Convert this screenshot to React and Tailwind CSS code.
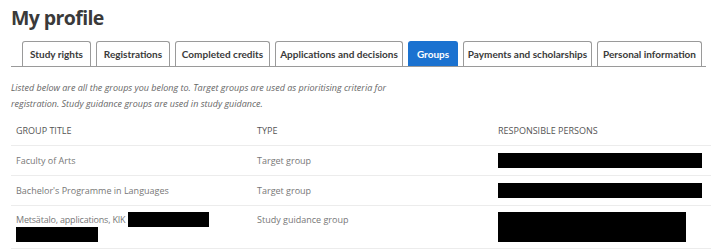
import React from 'react';

const tabs = [
  { label: 'Study rights', w: 'w-[69px]' },
  { label: 'Registrations', w: 'w-[74px]' },
  { label: 'Completed credits', w: 'w-[95px]' },
  { label: 'Applications and decisions', w: 'w-[128px]' },
  { label: 'Groups', w: 'w-[50px]', active: true },
  { label: 'Payments and scholarships', w: 'w-[129px]' },
  { label: 'Personal information', w: 'w-[105px]' },
];

const Redact = ({ className }) => <span className={`inline-block bg-black ${className}`} />;

export default function App() {
  return (
    <div className="w-[720px] h-[250px] overflow-hidden bg-white text-[#333] font-['Open_Sans',sans-serif]">
      <div className="px-[11px]">
        <h1 className="pt-[4px] text-[19.5px] leading-[28px] font-bold text-[#3a3a3a] tracking-[-0.6px]">My profile</h1>
        <div className="mt-[9px] flex gap-[5px] pl-[11px] border-b border-[#9a9a9a] w-[695px]">
          {tabs.map((t) => (
            <div
              key={t.label}
              className={`${t.w} h-[25px] flex items-center justify-center rounded-t-[3px] border border-b-0 font-['Lato',sans-serif] text-[10px] font-bold whitespace-nowrap ${
                t.active ? 'bg-[#1b72d0] border-[#1b72d0] text-white' : 'bg-white border-[#9a9a9a] text-[#3a3a3a]'
              }`}
            >
              {t.label}
            </div>
          ))}
        </div>
        <p className="mt-[13px] w-[400px] text-[9px] leading-[16px] italic text-[#666]">
          Listed below are all the groups you belong to. Target groups are used as prioritising criteria for registration. Study guidance groups are used in study guidance.
        </p>
        <div className="mt-[4px] w-[700px] text-[9px]">
          <div className="grid grid-cols-[241px_241px_1fr] px-[5px] h-[30px] items-center border-b border-[#ececec] uppercase text-[#555]">
            <div>Group title</div>
            <div>Type</div>
            <div>Responsible persons</div>
          </div>
          <div className="grid grid-cols-[241px_241px_1fr] px-[5px] h-[30px] items-center border-b border-[#ececec] text-[#777]">
            <div>Faculty of Arts</div>
            <div>Target group</div>
            <div><Redact className="w-[204px] h-[15px] align-middle" /></div>
          </div>
          <div className="grid grid-cols-[241px_241px_1fr] px-[5px] h-[30px] items-center border-b border-[#ececec] text-[#777]">
            <div>Bachelor's Programme in Languages</div>
            <div>Target group</div>
            <div><Redact className="w-[204px] h-[15px] align-middle" /></div>
          </div>
          <div className="grid grid-cols-[241px_241px_1fr] px-[5px] py-[6px] items-start border-b border-[#ececec] text-[#777]">
            <div className="leading-[15px] tracking-[-0.2px]">
              Metsätalo, applications, KIK <Redact className="w-[81px] h-[15px] align-top" />
              <br />
              <Redact className="w-[82px] h-[15px] align-top" />
            </div>
            <div className="leading-[15px]">Study guidance group</div>
            <div><Redact className="w-[188px] h-[30px] align-top" /></div>
          </div>
        </div>
      </div>
    </div>
  );
}
